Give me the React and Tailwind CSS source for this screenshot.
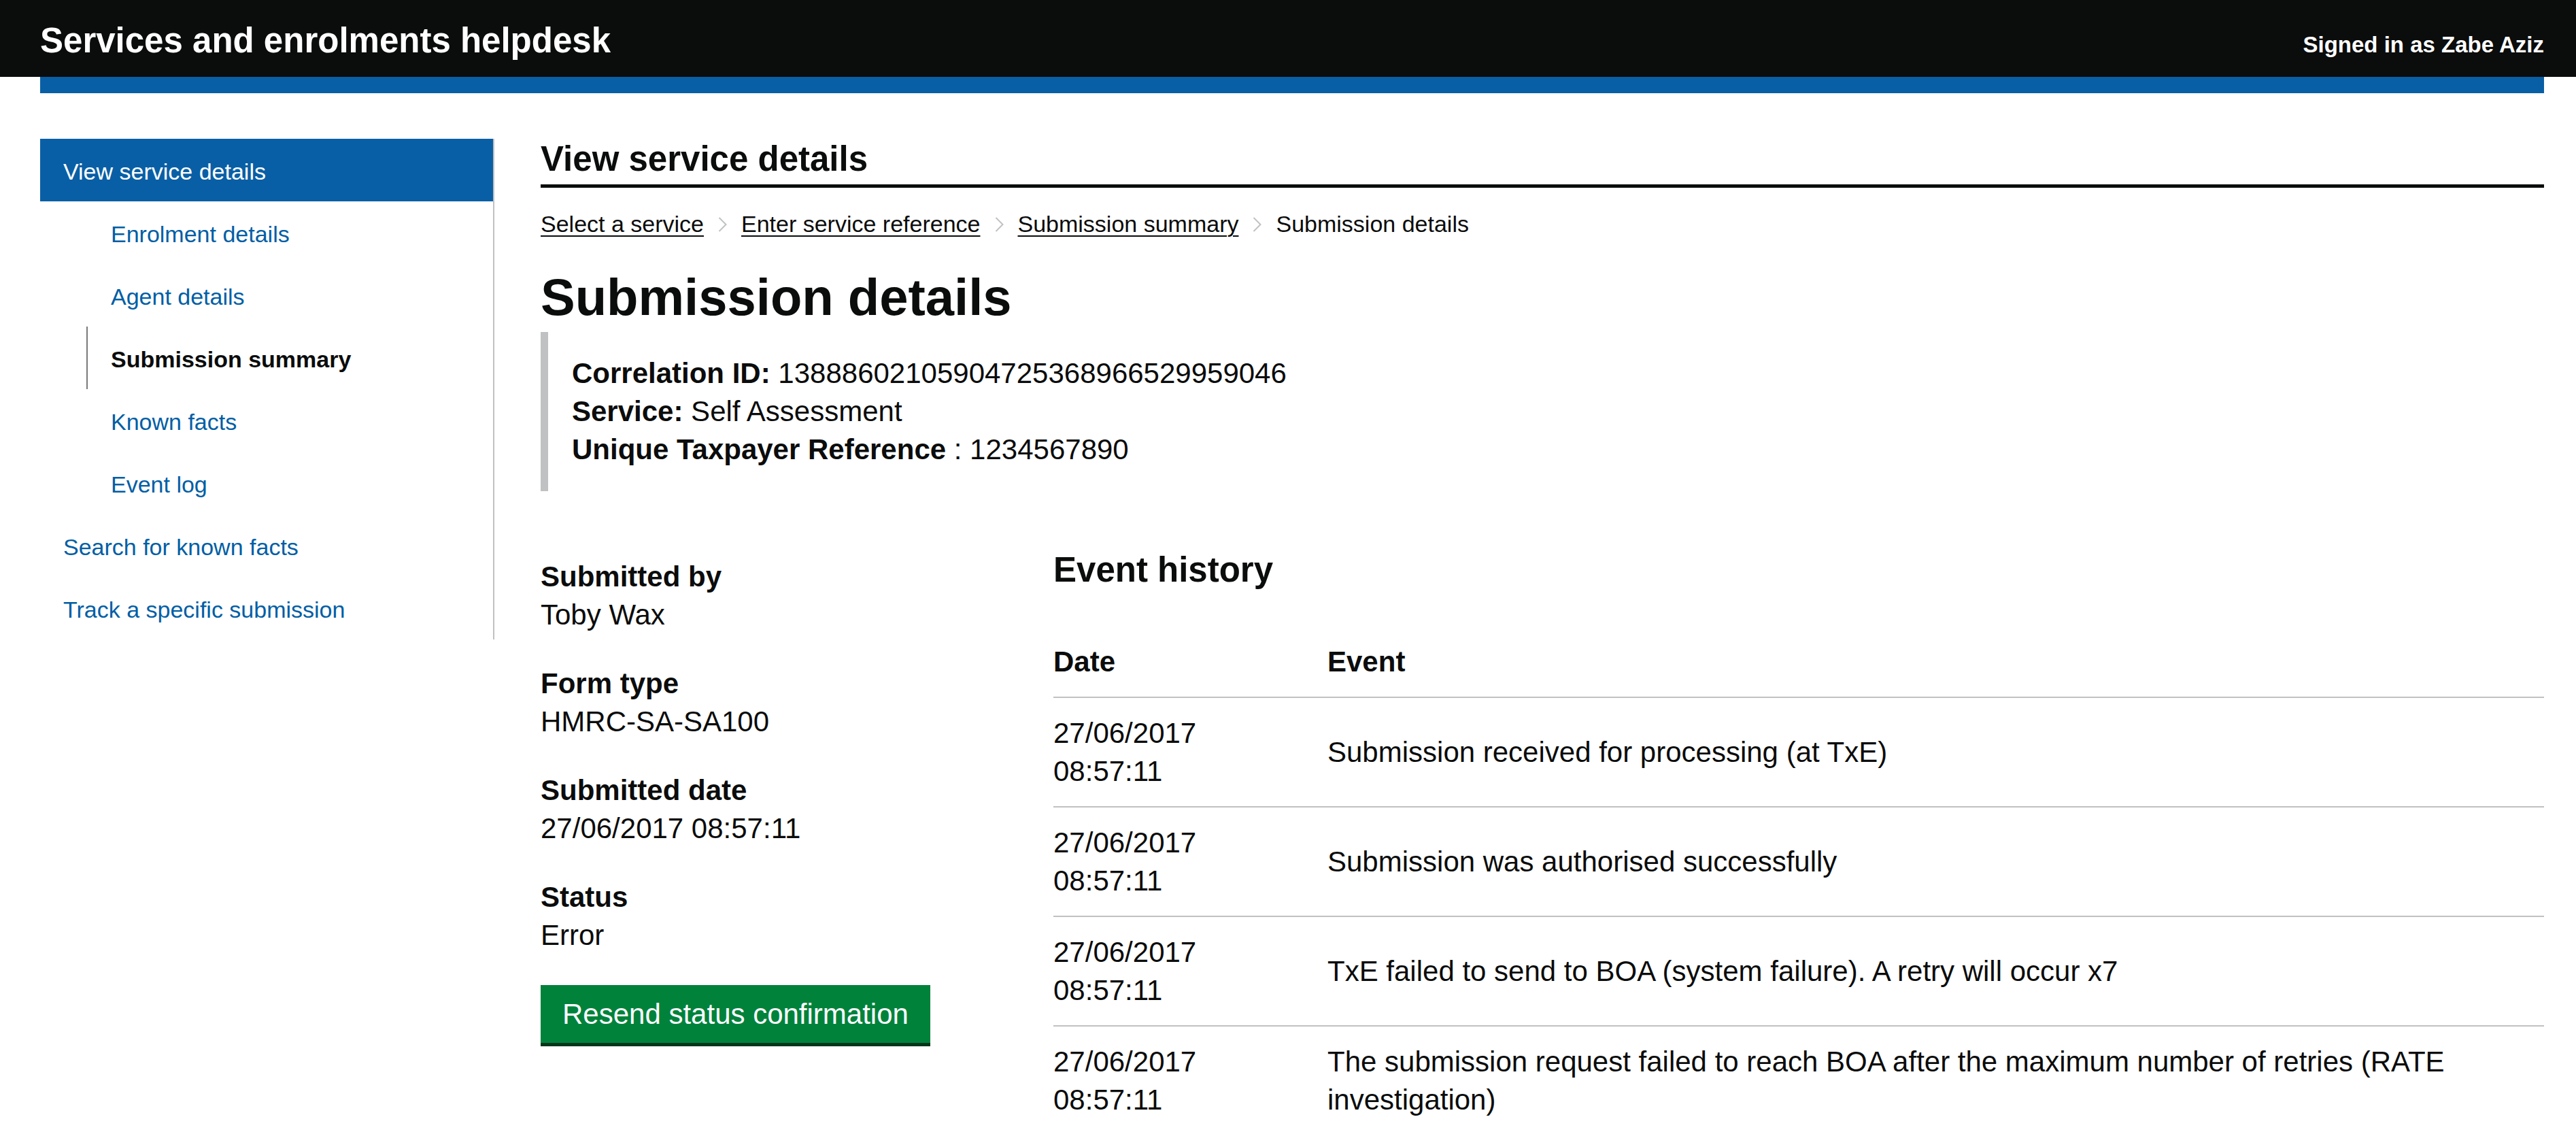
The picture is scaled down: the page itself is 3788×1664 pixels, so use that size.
import React from 'react';

const subLinks = [
  { label: 'Enrolment details' },
  { label: 'Agent details' },
  { label: 'Submission summary', active: true },
  { label: 'Known facts' },
  { label: 'Event log' },
];

const crumbs = ['Select a service', 'Enter service reference', 'Submission summary'];

const details = [
  { label: 'Submitted by', value: 'Toby Wax' },
  { label: 'Form type', value: 'HMRC-SA-SA100' },
  { label: 'Submitted date', value: '27/06/2017 08:57:11' },
  { label: 'Status', value: 'Error' },
];

const events = [
  { date: '27/06/2017 08:57:11', text: 'Submission received for processing (at TxE)' },
  { date: '27/06/2017 08:57:11', text: 'Submission was authorised successfully' },
  { date: '27/06/2017 08:57:11', text: 'TxE failed to send to BOA (system failure). A retry will occur x7' },
  {
    date: '27/06/2017 08:57:11',
    text: 'The submission request failed to reach BOA after the maximum number of retries (RATE investigation)',
  },
];

const Chevron = () => (
  <svg className="mx-[21px] w-[13px] h-[22px] shrink-0" viewBox="0 0 13 22" fill="none">
    <polyline points="1.5,1 11.5,11 1.5,21" stroke="#bfc1c3" strokeWidth="2" />
  </svg>
);

const Sidebar = () => (
  <nav className="w-[668px] shrink-0 border-r-2 border-[#bfc1c3] text-[34px] leading-[45px]">
    <div className="h-[92px] pt-[26px] pl-[34px] bg-[#095fa5] text-white">View service details</div>
    <ul className="ml-[68px]">
      {subLinks.map((item) => (
        <li
          key={item.label}
          className={`h-[92px] pt-[26px] pl-[34px] border-l-2 ${
            item.active ? 'border-[#7a7a7a] font-bold text-[#0b0c0c]' : 'border-transparent text-[#005ea5]'
          }`}
        >
          {item.label}
        </li>
      ))}
    </ul>
    <div className="h-[92px] pt-[26px] pl-[34px] text-[#005ea5]">Search for known facts</div>
    <div className="h-[92px] pt-[26px] pl-[34px] text-[#005ea5]">Track a specific submission</div>
  </nav>
);

export default function App() {
  return (
    <div className="min-h-screen bg-white text-[#0b0c0c] font-['Liberation_Sans',Arial,sans-serif]">
      {/* Header */}
      <header className="bg-[#0b0c0c]">
        <div className="ml-[59px] mr-[47px] h-[113px] pt-[34px] flex justify-between items-baseline text-white font-bold">
          <span className="text-[51px] leading-none">Services and enrolments helpdesk</span>
          <span className="text-[33px] leading-none">Signed in as Zabe Aziz</span>
        </div>
      </header>
      <div className="ml-[59px] mr-[47px] h-[24px] bg-[#095fa5]" />

      <div className="ml-[59px] mr-[47px] pt-[67px] pb-[80px] flex items-start gap-[68px]">
        <Sidebar />

        <main className="flex-1 min-w-0">
          <h2 className="text-[51px] leading-[60px] font-bold pb-[7px] border-b-[5px] border-[#0b0c0c]">
            View service details
          </h2>

          {/* Breadcrumbs */}
          <div className="mt-[31px] flex items-center text-[34px] leading-[45px]">
            {crumbs.map((c) => (
              <React.Fragment key={c}>
                <a className="underline decoration-[2px] underline-offset-[5px]">{c}</a>
                <Chevron />
              </React.Fragment>
            ))}
            <span>Submission details</span>
          </div>

          <h1 className="mt-[46px] text-[76px] leading-[77px] font-bold">Submission details</h1>

          {/* Inset */}
          <div className="mt-[13px] border-l-[11px] border-[#bfc1c3] pl-[35px] py-[33px] text-[42px] leading-[56px]">
            <p><span className="font-bold">Correlation ID:</span> 13888602105904725368966529959046</p>
            <p><span className="font-bold">Service:</span> Self Assessment</p>
            <p><span className="font-bold">Unique Taxpayer Reference</span> : 1234567890</p>
          </div>

          <div className="mt-[88px] flex items-start">
            {/* Summary column */}
            <div className="w-[754px] shrink-0 pt-[10px] text-[42px] leading-[56px]">
              {details.map((d) => (
                <div key={d.label} className="mb-[45px]">
                  <div className="font-bold">{d.label}</div>
                  <div>{d.value}</div>
                </div>
              ))}
              <button className="h-[85px] px-[32px] bg-[#00823b] text-white text-[42px] leading-none shadow-[0_5px_0_#003618]">
                Resend status confirmation
              </button>
            </div>

            {/* Event history */}
            <div className="flex-1 min-w-0">
              <h2 className="text-[51px] leading-[56px] font-bold">Event history</h2>
              <div className="mt-[56px] text-[42px] leading-[56px]">
                <div className="grid grid-cols-[403px_1fr] items-center py-[23px] border-b-2 border-[#bfc1c3] font-bold">
                  <div>Date</div>
                  <div>Event</div>
                </div>
                {events.map((e, i) => (
                  <div
                    key={i}
                    className="grid grid-cols-[403px_1fr] items-center pt-[24px] pb-[23px] border-b-2 border-[#bfc1c3]"
                  >
                    <div className="pr-[45px]">{e.date}</div>
                    <div>{e.text}</div>
                  </div>
                ))}
              </div>
            </div>
          </div>
        </main>
      </div>
    </div>
  );
}
